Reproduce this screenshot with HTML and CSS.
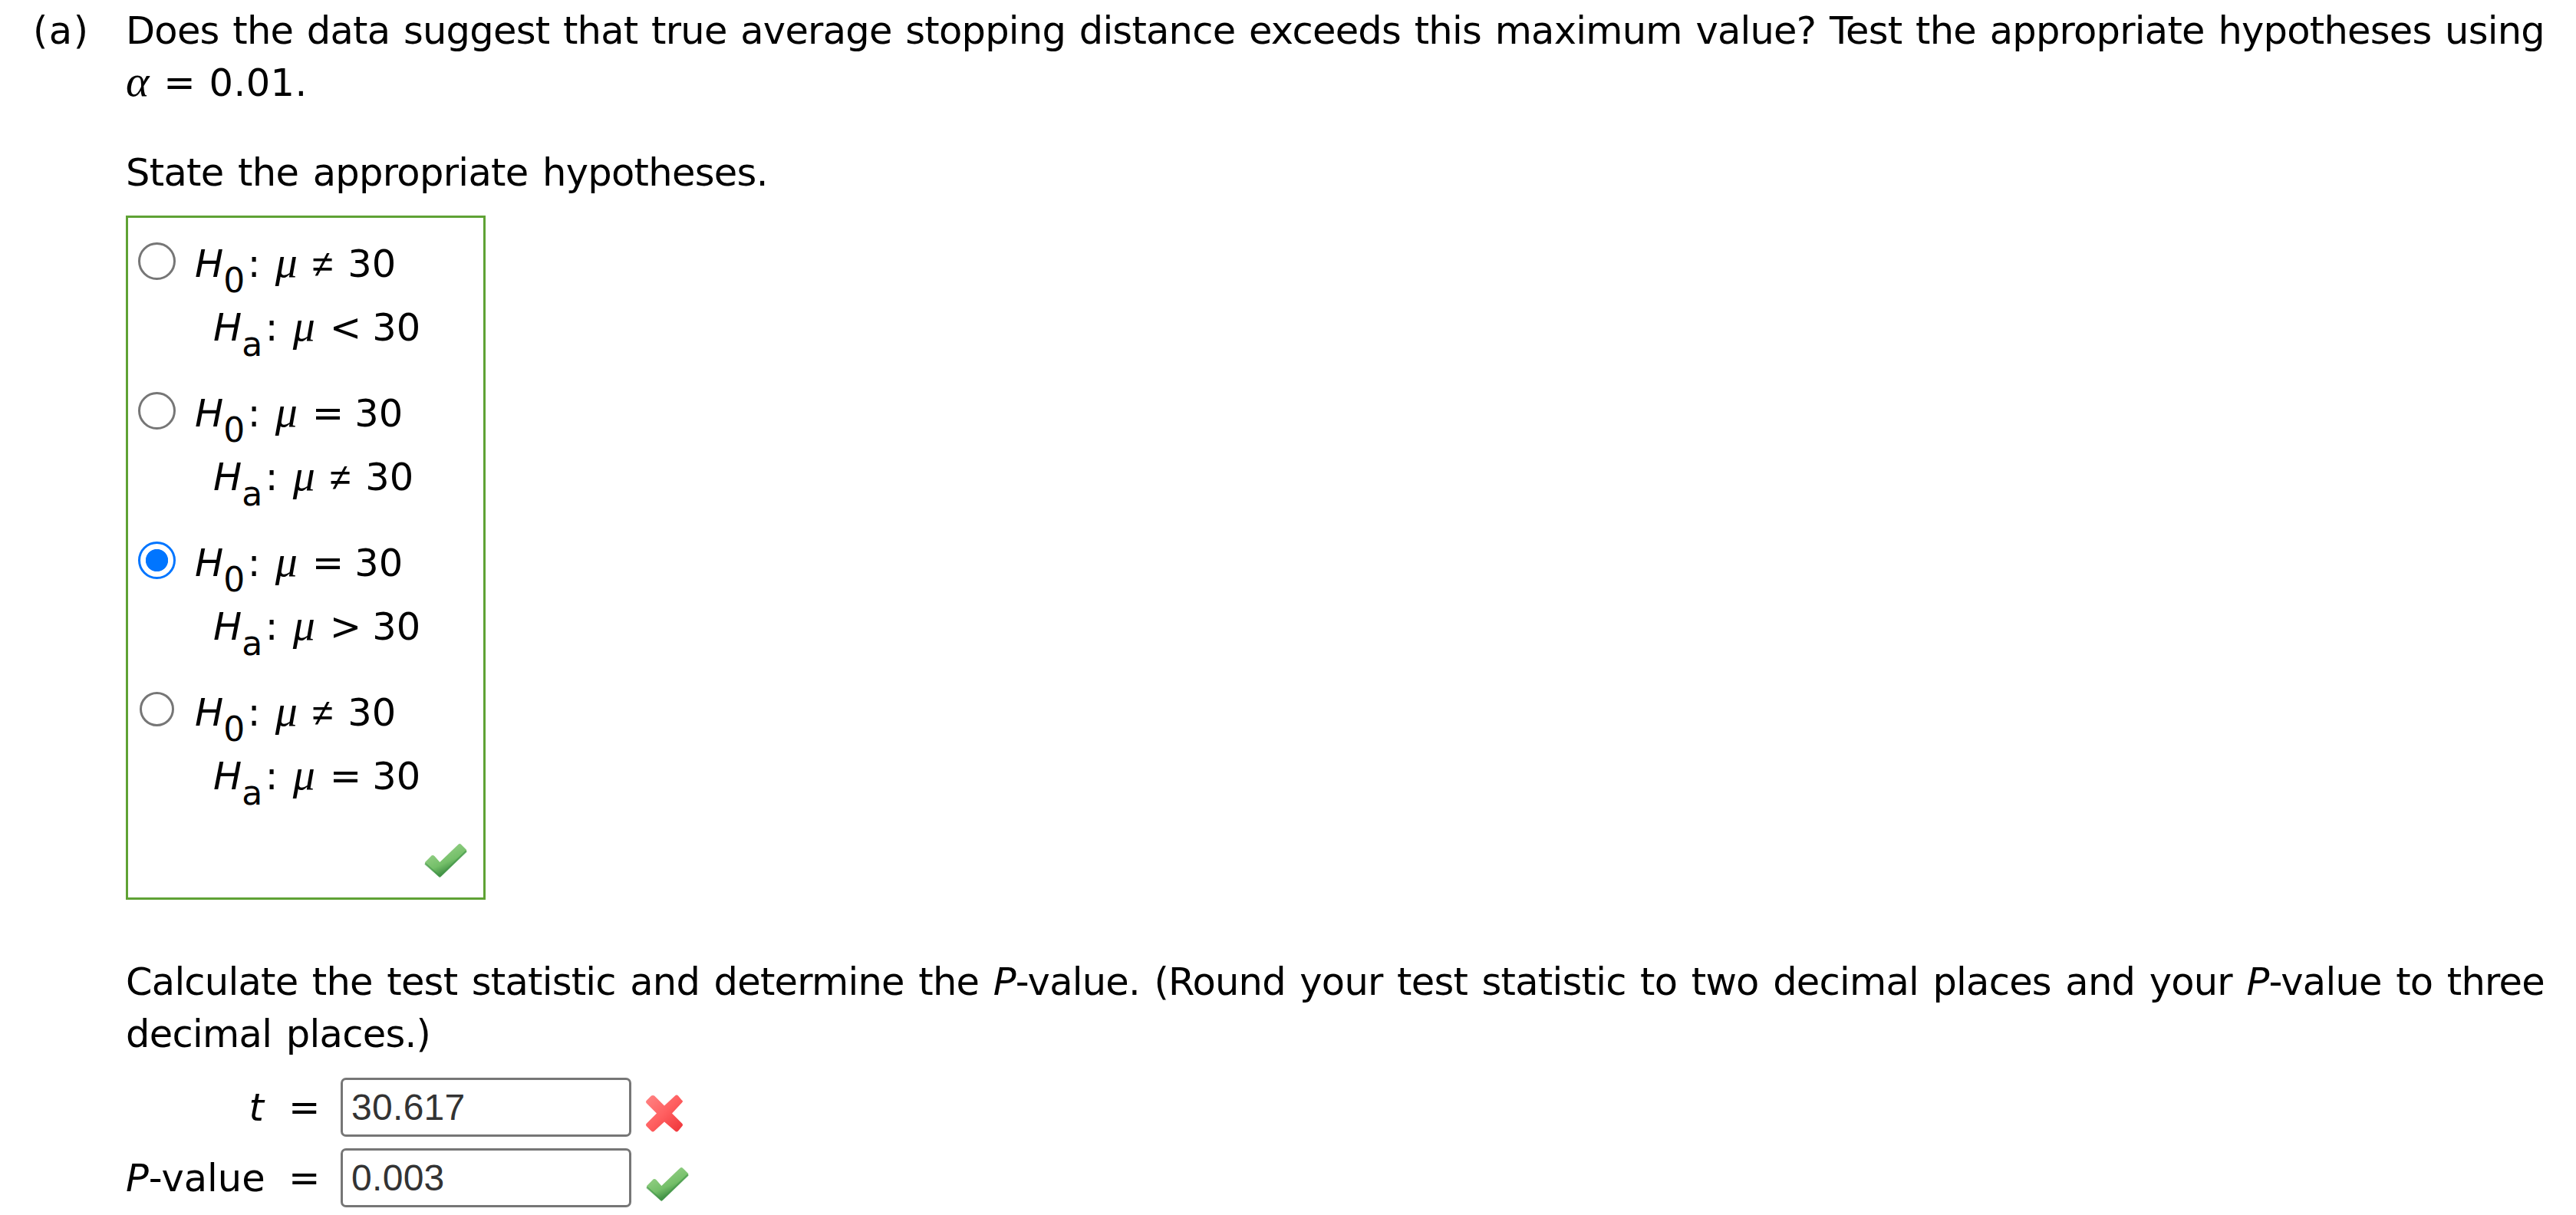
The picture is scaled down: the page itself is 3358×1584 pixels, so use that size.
FILE: index.html
```
<!DOCTYPE html>
<html lang="en">
<head>
<meta charset="utf-8">
<title>Hypothesis test</title>
<link rel="stylesheet" href="styles.css">
</head>
<body>
<svg class="defs" width="0" height="0" aria-hidden="true">
  <defs>
    <linearGradient id="green" gradientUnits="userSpaceOnUse" x1="24" y1="12" x2="36" y2="38"><stop offset="0" stop-color="#8ccb7e"/><stop offset=".55" stop-color="#74bf69"/><stop offset="1" stop-color="#3f8f43"/></linearGradient>
    <linearGradient id="red" x1="0" y1="0" x2="1" y2="1"><stop offset="0" stop-color="#ff8585"/><stop offset=".5" stop-color="#ff5f60"/><stop offset="1" stop-color="#ee3338"/></linearGradient>
    <symbol id="check" viewBox="0 0 60 50"><path d="M2 26 L11 17 Q13 16 15 18 L22 26 L47 2 Q49 0 51 2 L58 9 Q59 10 58 12 L24 45 Q22 47 20 45 L2 28 Z" fill="url(#green)"/><path d="M2 28 L22 45.500 L58 11" fill="none" stroke="#43964a" stroke-width="2.500" opacity=".65"/></symbol>
    <symbol id="cross" viewBox="0 0 50 50"><path d="M2 8 L8 2 Q10 1 12 2 L25 15 L39 2 Q41 0 43 2 L48 8 Q50 9 48 11 L35 25 L48 38 Q50 40 48 42 L43 48 Q41 50 39 48 L25 36 L12 48 Q10 50 8 48 L2 42 Q0 40 2 38 L15 25 L2 12 Q0 10 2 8 Z" fill="url(#red)"/></symbol>
  </defs>
</svg>
<main class="question">
  <div class="label">(a)</div>
  <div class="content">
    <p class="text"><span class="full">Does the data suggest that true average stopping distance exceeds this maximum value? Test the appropriate hypotheses using</span> <i class="alpha">α</i> = <span class="num">0.01.</span></p>
    <p class="text state">State the appropriate hypotheses.</p>
    <form class="options">
      <label class="option"><input class="radio" type="radio" name="h"><span class="pair">
        <span class="row"><i>H</i><sub>0</sub><span class="colon">:</span><i class="mu">μ</i><span class="op ne">≠</span>30</span>
        <span class="row alt"><i>H</i><sub class="a">a</sub><span class="colon">:</span><i class="mu">μ</i><span class="op">&lt;</span>30</span></span></label>
      <label class="option"><input class="radio" type="radio" name="h"><span class="pair">
        <span class="row"><i>H</i><sub>0</sub><span class="colon">:</span><i class="mu">μ</i><span class="op">=</span>30</span>
        <span class="row alt"><i>H</i><sub class="a">a</sub><span class="colon">:</span><i class="mu">μ</i><span class="op ne">≠</span>30</span></span></label>
      <label class="option"><input class="radio" type="radio" name="h" checked><span class="pair">
        <span class="row"><i>H</i><sub>0</sub><span class="colon">:</span><i class="mu">μ</i><span class="op">=</span>30</span>
        <span class="row alt"><i>H</i><sub class="a">a</sub><span class="colon">:</span><i class="mu">μ</i><span class="op">&gt;</span>30</span></span></label>
      <label class="option last"><input class="radio small" type="radio" name="h"><span class="pair">
        <span class="row"><i>H</i><sub>0</sub><span class="colon">:</span><i class="mu">μ</i><span class="op ne">≠</span>30</span>
        <span class="row alt"><i>H</i><sub class="a">a</sub><span class="colon">:</span><i class="mu">μ</i><span class="op">=</span>30</span></span></label>
      <svg class="check box-check"><use href="#check"/></svg>
    </form>
    <p class="text line-b"><span class="full">Calculate the test statistic and determine the <i>P</i>-value. (Round your test statistic to two decimal places and your <i>P</i>-value to three</span> decimal places.)</p>
    <div class="answers">
      <span class="name"><i>t</i></span><span class="eq">=</span><input class="field" type="text" value="30.617"><svg class="cross"><use href="#cross"/></svg>
      <span class="name"><i>P</i>-value</span><span class="eq">=</span><input class="field" type="text" value="0.003"><svg class="check"><use href="#check"/></svg>
    </div>
  </div>
</main>
</body>
</html>
```
FILE: styles.css
```
* { box-sizing: border-box; }
body { margin: 0; background: #fff; color: #000; overflow: hidden; font: 49.5px/68px Verdana, "DejaVu Sans", sans-serif; }
.defs { position: absolute; }
.question { display: flex; padding-top: 6px; height: 1584px; }
.label { width: 164px; flex: none; padding-left: 43px; letter-spacing: 1.5px; }
.content { width: 3153px; }
.text { margin: 0; letter-spacing: -0.7px; word-spacing: 3.5px; }
.full { display: block; white-space: nowrap; text-align-last: justify; letter-spacing: -0.76px; word-spacing: 0; }
.alpha { font-family: "Liberation Serif", serif; font-size: 58px; line-height: 0; margin-right: 1px; }
.num { letter-spacing: 0.4px; }
.state { margin-top: 49px; }
.options { display: flex; flex-direction: column; width: 469px; height: 892px; margin-top: 22px; padding: 28px 20px 0 13px; border: 3px solid #5fa235; }
.option { display: flex; flex: none; height: 195px; }
.option.last { height: 197px; }
.radio { appearance: none; flex: none; width: 49px; height: 49px; margin: 4px 25px 0 0; border: 3.5px solid #767676; border-radius: 50%; background: #fff; }
.radio:checked { border-color: #0075ff; background: radial-gradient(circle, #0075ff 14.2px, #fff 15px); }
.radio.small { width: 45px; height: 45px; margin: 5px 27px 0 2px; }
.pair { display: flex; flex-direction: column; margin-top: -2px; }
.row { height: 83px; line-height: 68px; white-space: nowrap; }
.alt { padding-left: 24px; }
sub { font-size: 44px; line-height: 0; vertical-align: -20px; }
.colon { display: inline-block; width: 36px; margin-left: 3.5px; }
.mu { display: inline-block; width: 48px; font-family: "Liberation Serif", serif; font-size: 58px; line-height: 1; }
.op { display: inline-block; width: 55.5px; }
.ne { width: 46.5px; font-family: "Liberation Sans", sans-serif; line-height: 1; }
.check { width: 58px; height: 48px; }
.cross { width: 50px; height: 51px; }
.box-check { flex: none; margin: 5px 0 0 auto; }
.line-b { margin-top: 73px; }
.answers { display: grid; grid-template-columns: 180px 100px 379px 80px; row-gap: 15px; margin-top: 23px; align-items: start; }
.name { text-align: right; white-space: nowrap; padding-top: 5px; }
.eq { padding: 5px 0 0 32px; }
.field { width: 379px; height: 77px; padding: 0 11px; border: 3px solid #767676; border-radius: 7px; font: 48px "Liberation Sans", Arial, sans-serif; letter-spacing: 0.3px; color: #333; background: #fff; }
.answers svg { margin: 21px 0 0 18px; }
.answers svg.check { margin-top: 24px; }
```
